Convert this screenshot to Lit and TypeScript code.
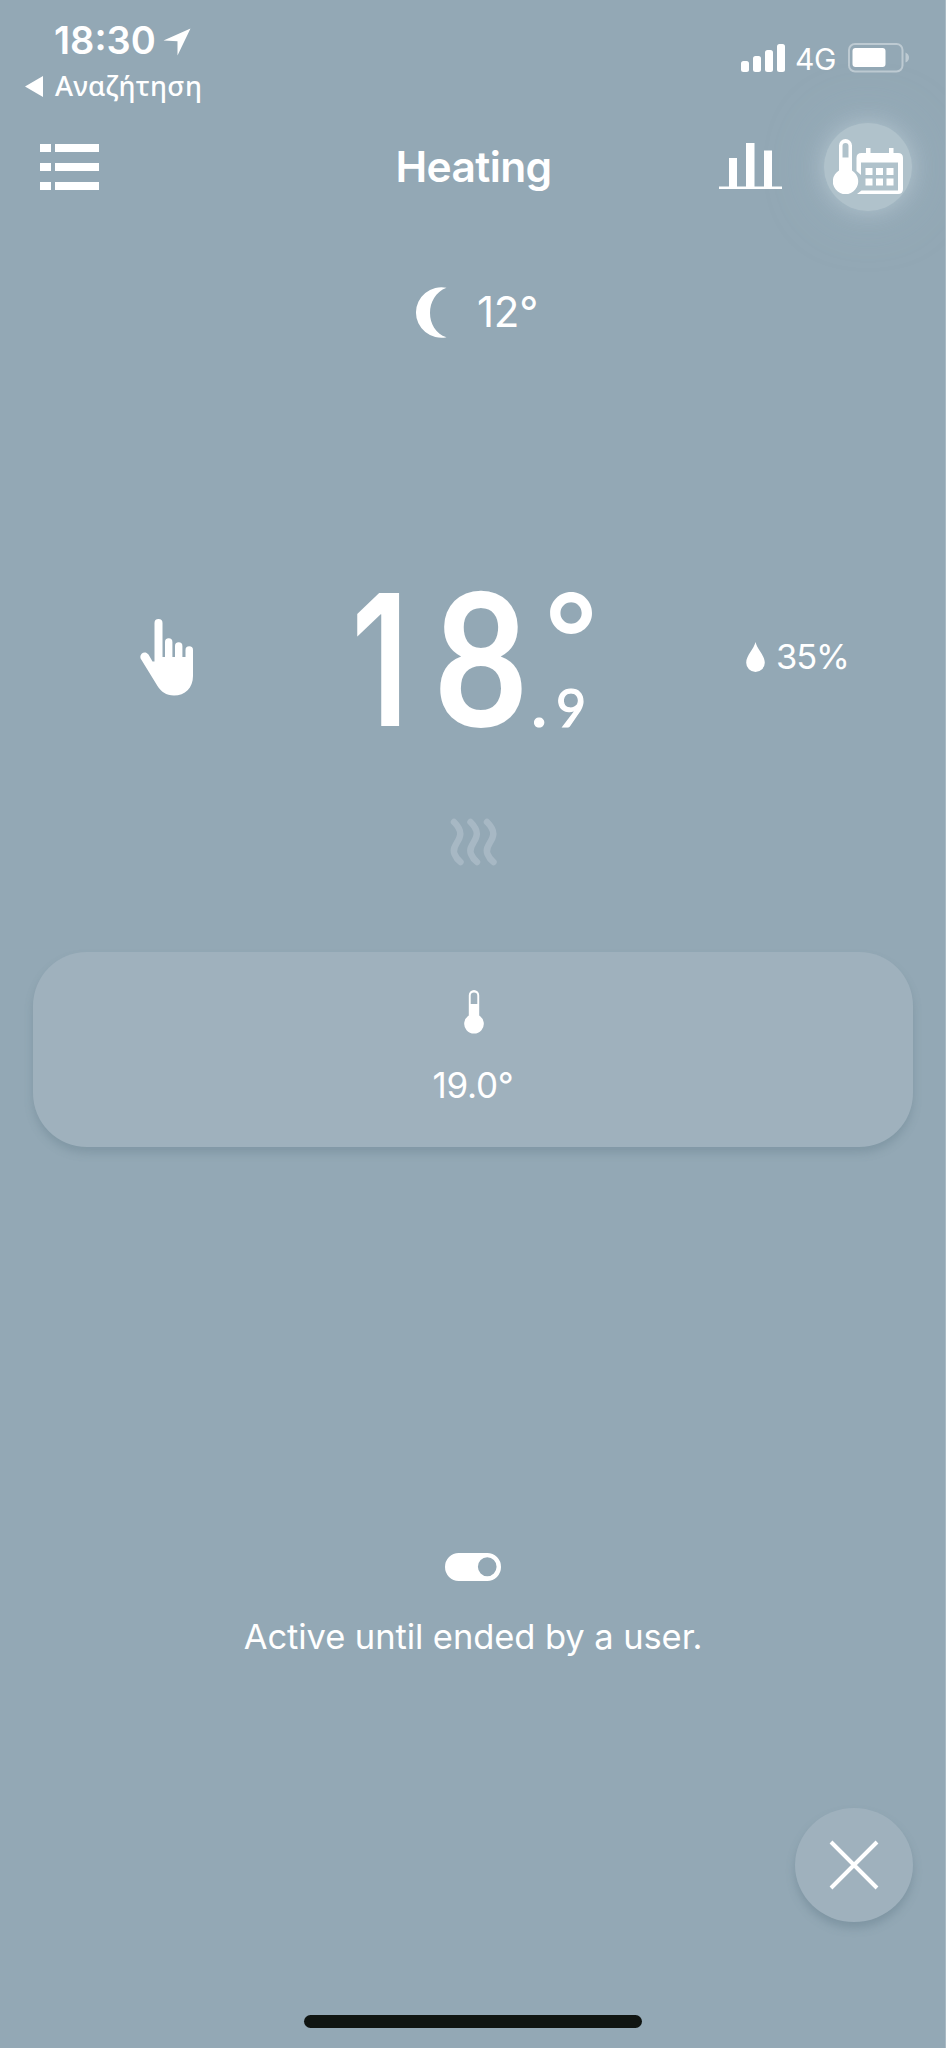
import { LitElement, html, css } from "lit";
import { customElement } from "lit/decorators.js";

@customElement("app-root")
export class AppRoot extends LitElement {
  static styles = css`
    :host {
      display: block;
      font-family: Inter, "Noto Sans", sans-serif;
      color: #fff;
    }
    svg { display: block; fill: #fff; flex: none; }
    .screen {
      box-sizing: border-box;
      width: 946px;
      height: 2048px;
      display: flex;
      flex-direction: column;
      background: #93a8b5;
      border-right: 1px solid #a9bac4;
      overflow: hidden;
    }
    .status { height: 110px; display: flex; justify-content: space-between; box-sizing: border-box; padding: 17px 36px 0 25px; }
    .time { height: 46px; display: flex; align-items: center; padding-left: 29px; font-size: 38px; font-weight: 600; }
    .time svg { margin: 3px 0 0 7px; }
    .back { height: 46px; display: flex; align-items: center; gap: 12px; font: 500 27.5px/46px "Noto Sans", sans-serif; letter-spacing: .35px; }
    .radio { height: 82px; display: flex; align-items: center; font-size: 30px; }
    .radio .net { width: 42px; margin: 1px 11px 0 10px; letter-spacing: -.5px; }
    .bar { height: 114px; display: grid; grid-template-columns: 1fr auto 1fr; align-items: center; padding: 0 33px; }
    .list { margin: 0 0 2px 7px; }
    .title { font-size: 42.5px; font-weight: 600; letter-spacing: -0.6px; margin: 0 0 2px 2px; }
    .chart { margin-bottom: 2px; }
    .actions { display: flex; justify-content: flex-end; align-items: center; gap: 42px; }
    .mode {
      width: 88px; height: 88px; border-radius: 50%;
      background: #b0c2cb;
      box-shadow: 0 0 22px rgba(190, 208, 217, .65), 0 0 60px rgba(178, 198, 210, .4);
      display: flex; align-items: center; justify-content: center;
    }
    .outside { height: 176px; display: flex; align-items: center; justify-content: center; gap: 30px; font-size: 42px; letter-spacing: -.2px; padding-left: 8px; }
    .outside span { margin-top: -1px; }
    .reading { height: 200px; margin-top: 160px; display: grid; grid-template-columns: 325px 274px 1fr; }
    .hand { padding: 59px 0 0 140px; }
    .temp { display: flex; line-height: 200px; }
    .one, .eight { width: 104px; display: flex; justify-content: center; }
    .one { font-size: 183px; font-weight: 600; transform: translateX(3px) scaleX(.75); }
    .eight { font-family: Lato, sans-serif; font-size: 186px; font-weight: 700; line-height: 191px; transform: scaleX(.87); }
    .side { display: flex; flex-direction: column; width: 66px; }
    .humid { display: flex; align-items: center; gap: 11px; height: 36px; padding: 79px 0 0 147px; font-size: 34.5px; letter-spacing: -1.1px; }
    .humid span { margin-top: -1px; }
    .deg { margin: 34px 0 0 10px; width: 56px; font-size: 125px; line-height: 90px; height: 80px; font-weight: 500; display: flex; justify-content: center; }
    .frac { font: 400 52px/60px Lato, sans-serif; display: flex; align-items: baseline; -webkit-text-stroke: 1.2px #fff; }
    .frac span { display: flex; justify-content: center; }
    .point { width: 12px; margin-right: 6px; font-weight: 700; font-size: 60px; }
    .tenth { width: 40px; }
    .waves { height: 58px; display: flex; justify-content: center; padding: 58px 0 76px 2px; }
    .card {
      height: 195px; margin: 0 32px 0 33px; border-radius: 54px; box-sizing: border-box; padding-top: 38px;
      background: #9fb1bd;
      box-shadow: 0 6px 9px rgba(90, 115, 130, .3);
      display: flex; flex-direction: column; align-items: center;
      font-size: 35px; letter-spacing: -.3px; gap: 29px; line-height: 45px;
    }
    .card svg { margin-left: 2px; }
    .note { margin-top: 406px; display: flex; flex-direction: column; align-items: center; gap: 32px; font-size: 34.5px; line-height: 47px; letter-spacing: -.08px; padding-left: 1px; }
    .fab {
      margin: 148px 32px 0 auto; width: 118px; height: 114px; border-radius: 50%;
      background: #9fb1bd;
      box-shadow: 0 6px 9px rgba(90, 115, 130, .35);
      display: flex; align-items: center; justify-content: center;
    }
    .home { width: 338px; height: 13px; border-radius: 7px; background: #101512; margin: 93px auto 0; }
  `;

  render() {
    return html`
      <div class="screen">
        <div class="status">
          <div>
            <div class="time"><span>18:30</span>
              <svg width="28" height="28" viewBox="0 0 28 28"><path d="M27.5 .5 14.5 27.5V13.2L.5 12.6Z"/></svg>
            </div>
            <div class="back">
              <svg width="18" height="21" viewBox="0 0 18 21"><path d="M18 0V21L0 10.5Z"/></svg>
              <span>Αναζήτηση</span>
            </div>
          </div>
          <div class="radio">
            <svg width="44" height="28" viewBox="0 0 44 28">
              <rect y="17" width="8" height="11" rx="2.5"/><rect x="12" y="12" width="8" height="16" rx="2.5"/>
              <rect x="24" y="6" width="8" height="22" rx="2.5"/><rect x="36" y="0" width="8" height="28" rx="2.5"/>
            </svg>
            <span class="net">4G</span>
            <svg width="61" height="30" viewBox="0 0 61 30">
              <rect x="1" y="1" width="53.5" height="27.5" rx="6" fill="none" stroke="#bdcad2" stroke-width="2"/>
              <rect x="4.5" y="5" width="33" height="19" rx="3"/>
              <path d="M57.5 9.5q3.5 1.5 3.5 5t-3.5 5Z" fill="#bdcad2"/>
            </svg>
          </div>
        </div>

        <div class="bar">
          <svg class="list" width="59" height="47" viewBox="0 0 59 47">
            <path d="M0 1h11v8H0ZM15 1h44v8H15ZM0 20h11v8H0ZM15 20h44v8H15ZM0 39h11v8H0ZM15 39h44v8H15Z"/>
          </svg>
          <div class="title">Heating</div>
          <div class="actions">
            <svg class="chart" width="63" height="46" viewBox="0 0 63 46"><path d="M0 43.5H10V15h8V43.5h9V0h8.5V43.5H45V7.5h8V43.5H63V46H0Z"/></svg>
            <div class="mode">
              <svg width="70" height="56" viewBox="0 0 70 56">
                <path fill-rule="evenodd" d="M6 6.5a6.5 6.5 0 0 1 13 0V31.5a12.7 12.7 0 1 1-13 0ZM9.5 7V18.5H15.5V7a3 3 0 0 0-6 0Z"/>
                <path fill-rule="evenodd" d="M23.5 32V19q0-5 5-5H33V9h4.5v5H56V9h4.5v5H65q5 0 5 5V50q0 5-5 5H24l4.500-3.500H65V23.500H28V36Z"/>
                <path d="M32.500 29h7v7h-7ZM43 29h7v7h-7ZM53.500 29h7v7h-7ZM32.500 39.500h7v7h-7ZM43 39.500h7v7h-7ZM53.500 39.500h7v7h-7Z"/>
              </svg>
            </div>
          </div>
        </div>

        <div class="outside">
          <svg width="32" height="51" viewBox="0 0 32 51"><path d="M31.500 .8A25.500 25.200 0 1 0 31.500 50.200C9.500 43 9.500 9 31.500 .8Z"/></svg>
          <span>12°</span>
        </div>

        <div class="reading">
          <div class="hand">
            <svg width="54" height="77" viewBox="0 0 54 77">
              <path d="M14.500 4a4 4 0 0 1 8 0V38H25V23a3.700 3.700 0 0 1 7.400 0V38H35V27a3.700 3.700 0 0 1 7.400 0V38H45.500V31a3.700 3.700 0 0 1 7.500 0V57C53 69 45 76.500 34 76.500 26 76.500 21 72.500 17.500 67L.6 39.500C-1 34.500 5 31 8.500 35.500L12.500 42.500H14.500Z"/>
            </svg>
          </div>
          <div class="temp">
            <span class="one">1</span><span class="eight">8</span>
            <div class="side">
              <span class="deg">°</span>
              <div class="frac"><span class="point">.</span><span class="tenth">9</span></div>
            </div>
          </div>
          <div class="humid">
            <svg width="19" height="30" viewBox="0 0 19 30"><path d="M9.500 0C11 7 18.800 13.500 18.800 20.700a9.300 9.300 0 0 1-18.600 0C.2 13.500 8 7 9.500 0Z"/></svg>
            <span>35%</span>
          </div>
        </div>

        <div class="waves">
          <svg width="48" height="48" viewBox="0 0 48 48">
            <g fill="none" stroke="#a7b8c4" stroke-width="6.5" stroke-linecap="round">
              <path d="M4 4C20 20 0 25 4.500 36Q6.500 41 10.500 44M20.500 4C36.500 20 16.500 25 21 36Q23 41 27 44M37 4C53 20 33 25 37.500 36Q39.500 41 43.500 44"/>
            </g>
          </svg>
        </div>

        <div class="card">
          <svg width="20" height="44" viewBox="0 0 20 44"><path fill-rule="evenodd" d="M4.800 5.300a5.200 5.200 0 0 1 10.400 0V25.500a9.800 9.800 0 1 1-10.400 0ZM6.700 5.800V14H13.300V5.800a3.300 3.300 0 0 0-6.600 0Z"/></svg>
          <span>19.0°</span>
        </div>

        <div class="note">
          <svg width="56" height="28" viewBox="0 0 57 28" preserveAspectRatio="none"><path fill-rule="evenodd" d="M14 0H43a14 14 0 0 1 0 28H14a14 14 0 0 1 0-28ZM43 4.300a9.500 9.500 0 1 0 0 19 9.500 9.500 0 0 0 0-19Z"/></svg>
          <span>Active until ended by a user.</span>
        </div>

        <div class="fab">
          <svg width="50" height="50" viewBox="0 0 50 50"><path d="M2 2 48 48M48 2 2 48" stroke="#fff" stroke-width="4"/></svg>
        </div>
        <div class="home"></div>
      </div>
    `;
  }
}
